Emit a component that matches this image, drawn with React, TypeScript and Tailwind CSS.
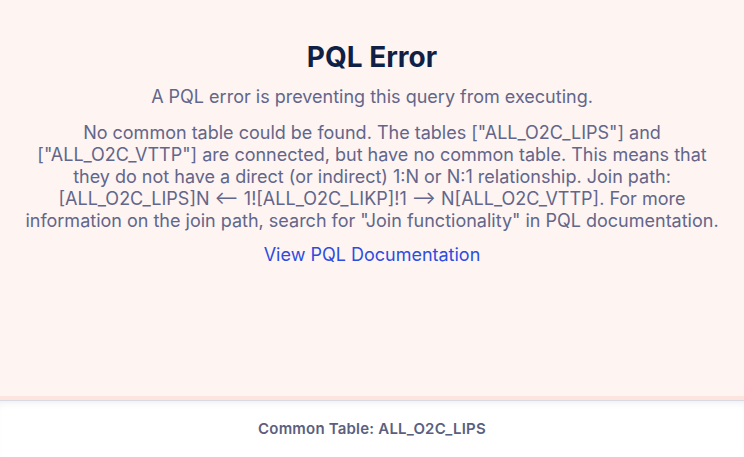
export default function App() {
  return (
    <div className="flex h-[457px] w-[744px] flex-col bg-white font-['Inter','Noto_Sans',sans-serif]">
      {/* Error panel */}
      <section className="flex h-[400px] flex-col items-center border-b-4 border-[#fde4df] bg-[#fef4f2] px-5 pt-[39px] text-center">
        <h1 className="text-[28px] font-bold leading-9 text-[#0f1f45]">PQL Error</h1>
        <p className="mt-[11px] text-[18px] leading-[22px] text-[#62668a]">
          A PQL error is preventing this query from executing.
        </p>
        <p className="mt-[14px] text-[18px] leading-[22px] text-[#62668a]">
          No common table could be found. The tables ["ALL_O2C_LIPS"] and ["ALL_O2C_VTTP"] are connected, but have no
          common table. This means that they do not have a direct (or indirect) 1:N or N:1 relationship. Join path:
          [ALL_O2C_LIPS]N ⟵ 1![ALL_O2C_LIKP]!1 ⟶ N[ALL_O2C_VTTP]. For more information on the join path, search for
          "Join functionality" in PQL documentation.
        </p>
        <a href="#" className="mt-[12px] text-[18px] leading-[22px] text-[#2d4de0]">
          View PQL Documentation
        </a>
      </section>

      {/* Footer */}
      <footer className="relative flex flex-1 items-center justify-center border-t border-[#d9d9e3] shadow-[inset_0_6px_8px_-6px_rgba(30,40,80,0.12)]">
        <span className="text-[15px] font-semibold tracking-[0.2px] text-[#5b5f7e]">Common Table: ALL_O2C_LIPS</span>
      </footer>
    </div>
  );
}
